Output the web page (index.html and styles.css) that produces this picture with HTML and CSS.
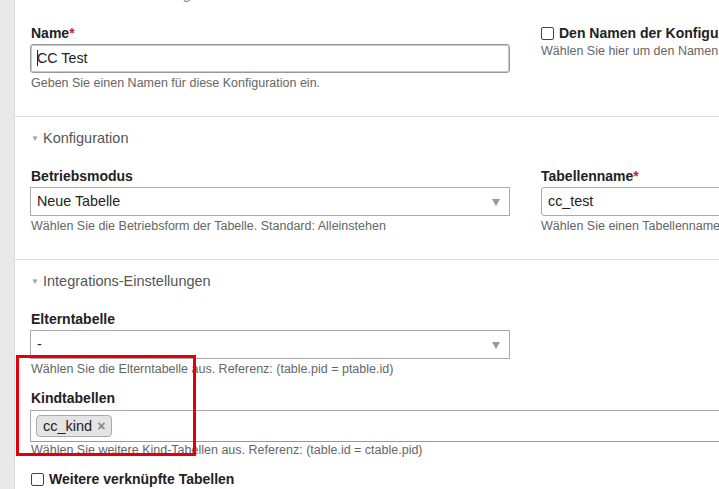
FILE: index.html
```html
<!DOCTYPE html>
<html lang="de">
<head>
<meta charset="utf-8">
<title>Konfiguration</title>
<link rel="stylesheet" href="styles.css">
</head>
<body>
<div class="page">
  <div class="gutter"></div>
  <div class="main">
    <section class="box first">
      <div class="legend cut"><span class="tri">▼</span>Titel und Beschreibung</div>
      <div class="row">
        <div class="col">
          <div class="label">Name<span class="req">*</span></div>
          <div class="input"><span class="caret"></span>CC Test</div>
          <div class="hint">Geben Sie einen Namen für diese Konfiguration ein.</div>
        </div>
        <div class="col">
          <div class="check-line"><span class="cb"></span><span class="label">Den Namen der Konfiguration übersetzen</span></div>
          <div class="hint">Wählen Sie hier um den Namen der Konfiguration zu übersetzen.</div>
        </div>
      </div>
    </section>

    <section class="box">
      <div class="legend"><span class="tri">▼</span>Konfiguration</div>
      <div class="row">
        <div class="col">
          <div class="label">Betriebsmodus</div>
          <div class="input select">Neue Tabelle<span class="arrow"></span></div>
          <div class="hint">Wählen Sie die Betriebsform der Tabelle. Standard: Alleinstehen</div>
        </div>
        <div class="col">
          <div class="label">Tabellenname<span class="req">*</span></div>
          <div class="input">cc_test</div>
          <div class="hint">Wählen Sie einen Tabellennamen für diese Konfiguration.</div>
        </div>
      </div>
    </section>

    <section class="box last">
      <div class="legend"><span class="tri">▼</span>Integrations-Einstellungen</div>
      <div class="col">
        <div class="label">Elterntabelle</div>
        <div class="input select">-<span class="arrow"></span></div>
        <div class="hint">Wählen Sie die Elterntabelle aus. Referenz: (table.pid = ptable.id)</div>
      </div>
      <div class="wide">
        <div class="label">Kindtabellen</div>
        <div class="tags"><span class="chip">cc_kind <span class="x">×</span></span></div>
        <div class="hint tight">Wählen Sie weitere Kind-Tabellen aus. Referenz: (table.id = ctable.pid)</div>
      </div>
      <div class="check-line bottom"><span class="cb"></span><span class="label">Weitere verknüpfte Tabellen</span></div>
    </section>
  </div>
</div>
<div class="annot"></div>
</body>
</html>
```
FILE: styles.css
```css
html, body {
  margin: 0;
  padding: 0;
  background: #fff;
  overflow: hidden;
}
body {
  font-family: "Liberation Sans", Arial, Helvetica, sans-serif;
  color: #222;
  width: 719px;
  height: 489px;
  position: relative;
}
.page {
  display: flex;
  min-height: 489px;
}
.gutter {
  width: 14px;
  flex: 0 0 14px;
  background: #e9e9e9;
  border-right: 1px solid #dcdcdc;
}
.main {
  flex: 0 0 1000px;
  width: 1000px;
}
.box {
  border-bottom: 1px solid #ddd;
  padding: 13px 0 25px 15px;
}
.box.first {
  padding-top: 0;
}
.box.last {
  border-bottom: 0;
  padding-bottom: 0;
}
.legend {
  font-size: 14.5px;
  line-height: 16px;
  color: #555;
  margin-bottom: 21px;
  padding-left: 1px;
}
.legend.cut {
  margin-top: -14px;
  margin-bottom: 22px;
  color: #888;
}
.tri {
  display: inline-block;
  font-size: 8px;
  color: #a0a0a0;
  width: 12px;
  vertical-align: 2px;
}
.row {
  display: flex;
  gap: 31px;
}
.col {
  width: 480px;
  flex: 0 0 480px;
}
.row .col + .col .label,
.row .col + .col .hint {
  padding-left: 0;
}
.wide {
  width: 991px;
  margin-top: 13px;
}
.label {
  font-size: 14px;
  font-weight: bold;
  line-height: 16px;
  color: #222;
  padding-left: 1px;
}
.req {
  color: #c7282e;
}
.input {
  box-sizing: border-box;
  margin-top: 3px;
  height: 29px;
  border: 1px solid #aaa;
  border-radius: 3px;
  font-size: 14.3px;
  line-height: 27px;
  padding: 0 6px;
  color: #222;
  position: relative;
  background: #fff;
}
.first .input {
  border-color: #999;
  box-shadow: inset 0 0 0 1px #c8c8c8;
}
.caret {
  display: inline-block;
  width: 1px;
  height: 16px;
  background: #222;
  vertical-align: -3px;
  margin-right: -1px;
}
.select {
  border-radius: 0;
}
.arrow {
  position: absolute;
  right: 9px;
  top: 11px;
  width: 0;
  height: 0;
  border-left: 4px solid transparent;
  border-right: 4px solid transparent;
  border-top: 7px solid #999;
}
.hint {
  font-size: 12.5px;
  line-height: 15px;
  color: #666;
  margin-top: 3px;
  padding-left: 1px;
  white-space: nowrap;
}
.hint.tight {
  margin-top: 1px;
}
.tags {
  box-sizing: border-box;
  margin-top: 4px;
  height: 32px;
  border: 1px solid #aaa;
  border-bottom-color: #999;
  padding: 4px 5px;
}
.chip {
  display: inline-block;
  box-sizing: border-box;
  height: 22px;
  padding: 0 6px;
  background: #e4e4e4;
  border: 1px solid #aaa;
  border-radius: 4px;
  font-size: 14.5px;
  line-height: 20px;
  color: #222;
}
.x {
  color: #888;
  font-weight: bold;
  font-size: 14px;
  margin-left: 1px;
}
.check-line {
  display: flex;
  align-items: center;
  height: 16px;
}
.check-line .label {
  padding-left: 0;
  white-space: nowrap;
}
.cb {
  box-sizing: border-box;
  width: 13px;
  height: 13px;
  border: 1px solid #444;
  border-radius: 2px;
  margin-right: 5px;
  background: #fff;
}
.check-line.bottom {
  margin-top: 13px;
  margin-left: 1px;
}
.annot {
  position: absolute;
  left: 16px;
  top: 355px;
  width: 174px;
  height: 95px;
  border: 3px solid #e3000b;
  pointer-events: none;
}
```
